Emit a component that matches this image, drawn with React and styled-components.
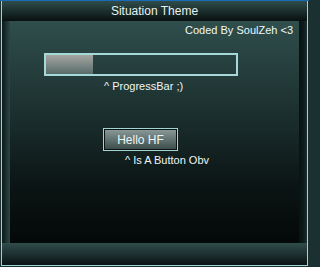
import React from 'react';
import styled, { createGlobalStyle } from 'styled-components';

const GlobalStyle = createGlobalStyle`
  html, body {
    margin: 0;
    padding: 0;
    background: #1b3030;
  }
  body {
    font-family: "Liberation Sans", Arial, sans-serif;
    font-size: 11px;
  }
`;

const Frame = styled.div`
  width: 309px;
  height: 267px;
  box-sizing: border-box;
  background: #1b3030;
  border-top: 1px solid #1a6bb5;
`;

const Window = styled.div`
  margin-left: 1px;
  width: 307px;
  height: 265px;
  box-sizing: border-box;
  border: 1px solid #9fd3d4;
  border-top: none;
  display: flex;
  flex-direction: column;
`;

const TitleBar = styled.div`
  height: 20px;
  flex: none;
  display: flex;
  align-items: center;
  justify-content: center;
  background: linear-gradient(to bottom, #2f4d4b, #081010);
  color: #e8f2f2;
  font-size: 12px;
`;

const Body = styled.div`
  height: 222px;
  flex: none;
  display: flex;
`;

const SideStrip = styled.div`
  width: 8px;
  flex: none;
  background: ${p => p.$right
    ? 'linear-gradient(to right, #081212, #0e1c1c 60%, #1c3030)'
    : 'linear-gradient(to right, #0c1818, #2c4746)'};
`;

const Main = styled.div`
  flex: 1;
  display: flex;
  flex-direction: column;
  align-items: flex-start;
  background: linear-gradient(to bottom, #2f4e4c 0%, #1a2d2c 45%, #0b1414 75%, #040808 100%);
`;

const Credit = styled.div`
  align-self: stretch;
  text-align: right;
  padding-right: 6px;
  margin-top: 3px;
  line-height: 13px;
  color: #f0f8f8;
`;

const Track = styled.div`
  margin-top: 16px;
  margin-left: 34px;
  width: 194px;
  height: 23px;
  box-sizing: border-box;
  border: 2px solid #a6d8d9;
`;

const Fill = styled.div`
  height: 100%;
  background: linear-gradient(to bottom, #a4a5a2, #586c6a);
`;

const Caption = styled.div`
  margin-top: ${p => p.$top}px;
  margin-left: ${p => p.$left}px;
  line-height: 13px;
  color: #eef6f6;
  white-space: nowrap;
`;

const Button = styled.button`
  margin-top: 35px;
  margin-left: 93px;
  width: 75px;
  height: 23px;
  box-sizing: border-box;
  padding: 0;
  border: 1px solid #a2d4d5;
  box-shadow: inset 0 0 0 1px #0a1212;
  background: linear-gradient(to bottom, #8c9c9a, #394947);
  color: #eef6f6;
  font-family: "Liberation Sans", Arial, sans-serif;
  font-size: 12px;
`;

const Footer = styled.div`
  height: 22px;
  flex: none;
  background: linear-gradient(to bottom, #2f4d4b, #0a1414);
`;

const App = () => {
  const progress = 47;

  return (
    <>
      <GlobalStyle />
      <Frame>
        <Window>
          <TitleBar>Situation Theme</TitleBar>
          <Body>
            <SideStrip />
            <Main>
              <Credit>Coded By SoulZeh &lt;3</Credit>
              <Track>
                <Fill style={{ width: progress + 'px' }} />
              </Track>
              <Caption $top={4} $left={94}>^ ProgressBar ;)</Caption>
              <Button>Hello HF</Button>
              <Caption $top={3} $left={115}>^ Is A Button Obv</Caption>
            </Main>
            <SideStrip $right />
          </Body>
          <Footer />
        </Window>
      </Frame>
    </>
  );
};

export default App;
